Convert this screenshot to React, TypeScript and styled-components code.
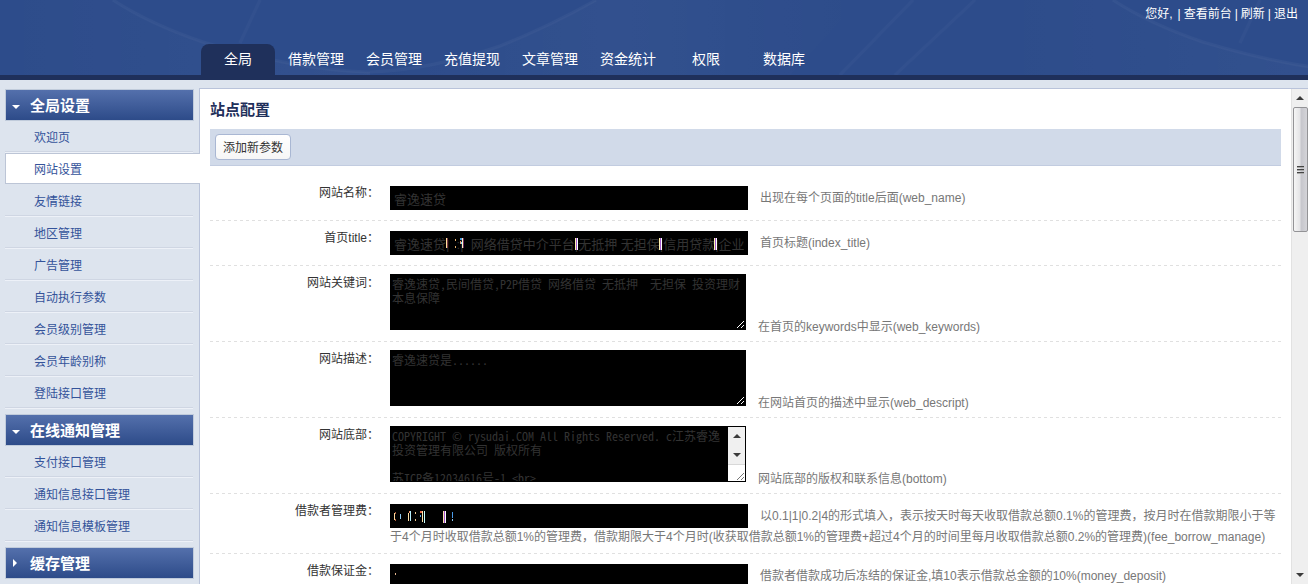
import React from "react";
import styled, { createGlobalStyle, css } from "styled-components";

const latin = `"Liberation Sans", "Noto Sans CJK SC", sans-serif`;
const cjk = `"Noto Sans CJK SC", sans-serif`;

const GlobalStyle = createGlobalStyle`
  *, *::before, *::after { box-sizing: border-box; }
  html, body { margin: 0; overflow: hidden; }
  body { font: 12px/15px ${latin}; color: #333; background: #dde4ee; }
  a { color: inherit; text-decoration: none; }
`;

const Page = styled.div`
  display: flex;
  flex-direction: column;
  height: 100vh;
`;

const Header = styled.header`
  position: relative;
  display: flex;
  flex-direction: column;
  justify-content: space-between;
  flex: none;
  height: 80px;
  background: #2d4c8b;
  border-bottom: 5px solid #1f305b;
`;

const Backdrop = styled.svg`
  position: absolute;
  inset: 0;
  width: 100%;
  height: 100%;
`;

const UserLinks = styled.div`
  position: relative;
  display: flex;
  justify-content: flex-end;
  gap: 3px;
  padding: 7px 10px 0 0;
  color: #fff;
`;

const Greeting = styled.span`
  margin-right: 2px;
`;

const Tabs = styled.nav`
  position: relative;
  display: flex;
  gap: 4px;
  padding-left: 201px;
`;

const Tab = styled.a<{ $active?: boolean }>`
  width: 74px;
  height: 31px;
  border-radius: 8px 8px 0 0;
  color: #fff;
  font-size: 14px;
  line-height: 30px;
  text-align: center;
  white-space: nowrap;
  background: ${(p) => (p.$active ? "#1f305b" : "transparent")};
`;

const Body = styled.div`
  display: flex;
  flex: 1;
  min-height: 0;
  padding-top: 8px;
`;

const Sidebar = styled.aside`
  flex: none;
  width: 199px;
  padding: 1px 0 0 5px;
`;

const Group = styled.section`
  margin-bottom: 5px;
`;

const GroupButton = styled.button`
  display: flex;
  align-items: center;
  gap: 9px;
  width: 189px;
  height: 32px;
  padding: 0 6px;
  border: 1px solid #c0cbdb;
  background: linear-gradient(#5470ac, #2d4b89);
  color: #fff;
  font: bold 15px/30px ${cjk};
`;

const MenuList = styled.ul`
  margin: 0;
  padding: 0;
  list-style: none;
`;

const MenuItem = styled.li<{ $active?: boolean }>`
  height: 32px;
  margin-right: 6px;
  padding-left: 29px;
  border-bottom: 1px solid #edf1f8;
  box-shadow: inset 0 -1px #cfd6e3;
  color: #34539a;
  line-height: 34px;
  ${(p) =>
    p.$active &&
    css`
      position: relative;
      height: 31px;
      margin: 0 -1px 1px 0;
      padding-left: 28px;
      border: solid #bcc5d6;
      border-width: 1px 0 1px 1px;
      box-shadow: none;
      background: #fff;
      line-height: 32px;
    `}
`;

const Main = styled.main`
  display: flex;
  flex: 1;
  min-width: 0;
  overflow: hidden;
  border: solid #b9c3da;
  border-width: 1px 0 0 1px;
  background: #fff;
`;

const Content = styled.div`
  flex: 1;
  min-width: 0;
  padding: 0 10px;
`;

const Title = styled.h1`
  margin: 0;
  color: #1f305b;
  font: bold 15px/40px ${cjk};
`;

const Toolbar = styled.div`
  height: 37px;
  margin-bottom: 10px;
  padding: 5px;
  border-bottom: 1px solid #c2cce0;
  background: #d1dae9;
`;

const AddButton = styled.button`
  height: 26px;
  padding: 0 7px;
  border: 1px solid #a9b7d3;
  border-radius: 4px;
  background: linear-gradient(#fff, #f6f6f6);
  color: #333;
  font: 12px/22px ${cjk};
`;

const Row = styled.div`
  display: flex;
  padding: 8px 0 9px;
  background: repeating-linear-gradient(90deg, #e0e0e0 0 3px, transparent 3px 6px) bottom / 100% 1px no-repeat;
`;

const RowLabel = styled.label`
  flex: none;
  width: 180px;
  padding: 2px 11px 0 0;
  text-align: right;
`;

const RowField = styled.div`
  flex: 1;
  min-width: 0;
`;

const Control = styled.span<{ $multiline?: boolean }>`
  position: relative;
  display: inline-block;
  vertical-align: ${(p) => (p.$multiline ? "bottom" : "middle")};
  margin: ${(p) => (p.$multiline ? "0 12px 3px 0" : "2px 12px 2px 0")};
`;

const TextInput = styled.input`
  display: block;
  width: 358px;
  height: 24px;
  padding: 0 3px;
  border: 1px solid #000;
  border-radius: 0;
  background: #000;
  color: #333;
  font: 13px/22px ${latin};
`;

const TextBox = styled.textarea`
  display: block;
  width: 356px;
  height: 56px;
  padding: 2px 1px;
  border: 1px solid #000;
  background: #000;
  color: #333;
  font: 12px/14px ${cjk};
  font-feature-settings: "hwid";
  overflow: hidden;
  resize: none;
`;

const Hint = styled.span<{ $multiline?: boolean }>`
  color: #777;
  line-height: ${(p) => (p.$multiline ? "12px" : "15px")};
  vertical-align: ${(p) => (p.$multiline ? "bottom" : "middle")};
`;

const Marks = styled.svg`
  position: absolute;
  left: 0;
  top: 0;
  pointer-events: none;
`;

const Grip = styled.svg`
  position: absolute;
  right: 1px;
  bottom: 1px;
  pointer-events: none;
`;

const BoxScroll = styled.div`
  position: absolute;
  top: 1px;
  right: 1px;
  bottom: 1px;
  display: flex;
  flex-direction: column;
  justify-content: space-around;
  align-items: center;
  width: 17px;
  padding-bottom: 17px;
  background: linear-gradient(#f0f0f0 0 37px, #d8d8d8 37px 38px, #fff 38px);
`;

const PageScroll = styled.div`
  display: flex;
  flex-direction: column;
  align-items: center;
  flex: none;
  width: 17px;
  border-left: 1px solid #e2e2e2;
  background: #efefef;
`;

const ScrollThumb = styled.div`
  display: flex;
  flex-direction: column;
  align-items: center;
  justify-content: center;
  gap: 1px;
  width: 15px;
  height: 125px;
  border: 1px solid #939396;
  border-radius: 2px;
  background: linear-gradient(90deg, #f5f5f5, #e4e4e6 45%, #c6c6cc 55%, #d4d4d8);
`;

const ThumbLine = styled.span`
  width: 7px;
  height: 2px;
  border-top: 1px solid #444;
  background: #aaa;
`;

const ScrollEnd = styled.div<{ $last?: boolean }>`
  display: flex;
  align-items: center;
  height: 18px;
  margin-top: ${(p) => (p.$last ? "auto" : "0")};
`;

const Arrow = ({ up }: { up?: boolean }) => (
  <svg width="8" height="4" viewBox="0 0 8 4" aria-hidden="true">
    <path d={up ? "M4 0 8 4H0Z" : "M0 0H8L4 4Z"} fill="#3a3a3a" />
  </svg>
);

type Mark = [x: number, y: number, w: number, h: number, color: string];

type Field = {
  id: string;
  label: string;
  hint: string;
  value: string;
  kind?: "area" | "scroll";
  marks?: Mark[];
};

const pipe = (x: number): Mark[] => [
  [x, 7, 1, 12, "#fff3b0"],
  [x + 1, 7, 1, 12, "#a45bd0"],
  [x + 2, 7, 1, 12, "#fff"],
];

const fields: Field[] = [
  { id: "web_name", label: "网站名称", value: "睿逸速贷", hint: "出现在每个页面的title后面(web_name)" },
  {
    id: "index_title",
    label: "首页title",
    value: "睿逸速贷|  :|  网络借贷中介平台|无抵押 无担保|信用贷款|企业",
    hint: "首页标题(index_title)",
    marks: [
      [56, 7, 1, 10, "#ffe29a"],
      [57, 7, 1, 10, "#7a3b4c"],
      [65, 8, 1, 2, "#e8b46c"],
      [65, 15, 1, 2, "#e8b46c"],
      [70, 7, 2, 2, "#4a9be0"],
      [70, 10, 1, 3, "#f0a070"],
      [71, 11, 1, 2, "#7ad0ff"],
      [72, 7, 1, 10, "#fff0c0"],
      [73, 7, 1, 10, "#6d2c5c"],
      ...pipe(185),
      ...pipe(269),
      ...pipe(324),
    ],
  },
  {
    id: "web_keywords",
    label: "网站关键词",
    kind: "area",
    value: "睿逸速贷,民间借贷,P2P借贷 网络借贷 无抵押  无担保 投资理财\n本息保障",
    hint: "在首页的keywords中显示(web_keywords)",
  },
  { id: "web_descript", label: "网站描述", kind: "area", value: "睿逸速贷是......", hint: "在网站首页的描述中显示(web_descript)" },
  {
    id: "bottom",
    label: "网站底部",
    kind: "scroll",
    value: "COPYRIGHT © rysudai.COM All Rights Reserved. c江苏睿逸\n投资管理有限公司 版权所有\n\n苏ICP备12034616号-1 <br>",
    hint: "网站底部的版权和联系信息(bottom)",
  },
  {
    id: "fee_borrow_manage",
    label: "借款者管理费",
    value: "",
    hint: "以0.1|1|0.2|4的形式填入，表示按天时每天收取借款总额0.1%的管理费，按月时在借款期限小于等于4个月时收取借款总额1%的管理费，借款期限大于4个月时(收获取借款总额1%的管理费+超过4个月的时间里每月收取借款总额0.2%的管理费)(fee_borrow_manage)",
    marks: [
      [5, 8, 1, 2, "#b0603c"],
      [4, 9, 1, 7, "#ffd79a"],
      [5, 15, 1, 2, "#b0603c"],
      [10, 10, 1, 5, "#8fc8f0"],
      [18, 9, 1, 8, "#ffe0a8"],
      [19, 7, 1, 2, "#e89068"],
      [20, 7, 1, 10, "#b8f0ff"],
      [25, 8, 1, 2, "#f0c890"],
      [25, 15, 1, 2, "#f0c890"],
      [30, 7, 2, 2, "#e86a4a"],
      [30, 11, 1, 2, "#5aa8f0"],
      [32, 7, 1, 11, "#ffe8b0"],
      [34, 7, 1, 12, "#c8ffff"],
      [53, 7, 1, 12, "#ffe8b0"],
      [54, 7, 1, 12, "#a050d0"],
      [55, 7, 1, 12, "#fff"],
      [62, 8, 1, 6, "#4a9be8"],
      [62, 15, 1, 2, "#8fc8f0"],
    ],
  },
  {
    id: "money_deposit",
    label: "借款保证金",
    value: "",
    hint: "借款者借款成功后冻结的保证金,填10表示借款总金额的10%(money_deposit)",
    marks: [[5, 9, 1, 2, "#e8b890"]],
  },
];

const tabs = ["全局", "借款管理", "会员管理", "充值提现", "文章管理", "资金统计", "权限", "数据库"];

const groups = [
  {
    name: "全局设置",
    open: true,
    items: ["欢迎页", "网站设置", "友情链接", "地区管理", "广告管理", "自动执行参数", "会员级别管理", "会员年龄别称", "登陆接口管理"],
  },
  { name: "在线通知管理", open: true, items: ["支付接口管理", "通知信息接口管理", "通知信息模板管理"] },
  { name: "缓存管理", open: false, items: [] },
];

const ResizeGrip = ({ color }: { color: string }) => (
  <Grip width="8" height="8" viewBox="0 0 8 8" aria-hidden="true" shapeRendering="crispEdges">
    <path d="M0 7 7 0M4 7 7 4" stroke={color} fill="none" />
  </Grip>
);

function FieldRow({ field }: { field: Field }) {
  const multiline = Boolean(field.kind);
  return (
    <Row>
      <RowLabel htmlFor={field.id}>{field.label}：</RowLabel>
      <RowField>
        <Control $multiline={multiline}>
          {multiline ? (
            <TextBox id={field.id} defaultValue={field.value} spellCheck={false} />
          ) : (
            <TextInput id={field.id} type="text" defaultValue={field.value} />
          )}
          {field.marks && (
            <Marks width="358" height="24" aria-hidden="true" shapeRendering="crispEdges">
              {field.marks.map(([x, y, w, h, color], i) => (
                <rect key={i} x={x} y={y} width={w} height={h} fill={color} />
              ))}
            </Marks>
          )}
          {field.kind === "scroll" && (
            <BoxScroll>
              <Arrow up />
              <Arrow />
            </BoxScroll>
          )}
          {multiline && <ResizeGrip color={field.kind === "scroll" ? "#777" : "#fff"} />}
        </Control>
        <Hint $multiline={multiline}>{field.hint}</Hint>
      </RowField>
    </Row>
  );
}

export default function App() {
  return (
    <Page>
      <GlobalStyle />
      <Header>
        <Backdrop aria-hidden="true">
          <defs>
            <linearGradient id="sweep" x1="0" x2="1" y1="0" y2="0">
              <stop offset="0" stopColor="#fff" stopOpacity="0" />
              <stop offset="0.5" stopColor="#fff" stopOpacity="0.025" />
              <stop offset="1" stopColor="#fff" stopOpacity="0" />
            </linearGradient>
            <linearGradient id="rise" x1="0" x2="1" y1="0" y2="0">
              <stop offset="0" stopColor="#fff" stopOpacity="0" />
              <stop offset="1" stopColor="#fff" stopOpacity="0.03" />
            </linearGradient>
            <pattern id="waves" width="1000" height="75" patternUnits="userSpaceOnUse">
              <path d="M0 0H113Q150 24 203 42 300 71 370 72V75H0Z" fill="url(#rise)" />
              <path d="M370 75V72Q430 70 500 46 550 26 596 0H860L790 75Z" fill="url(#sweep)" />
              <path d="M113 0Q150 24 203 42 300 71 370 72 430 70 500 46 550 26 596 0" fill="none" stroke="#fff" strokeOpacity="0.03" strokeWidth="3" />
              <path d="M240 43 260 0M840 75 913 0M895 75 975 0" fill="none" stroke="#fff" strokeOpacity="0.025" strokeWidth="3" />
            </pattern>
          </defs>
          <rect width="100%" height="100%" fill="url(#waves)" />
        </Backdrop>
        <UserLinks>
          <Greeting>您好,</Greeting>
          <span>|</span>
          <a href="#front">查看前台</a>
          <span>|</span>
          <a href="#refresh">刷新</a>
          <span>|</span>
          <a href="#logout">退出</a>
        </UserLinks>
        <Tabs>
          {tabs.map((tab, i) => (
            <Tab key={tab} href="#tab" $active={i === 0}>
              {tab}
            </Tab>
          ))}
        </Tabs>
      </Header>
      <Body>
        <Sidebar>
          {groups.map((group) => (
            <Group key={group.name}>
              <GroupButton type="button" aria-expanded={group.open}>
                <svg width="9" height="9" viewBox="0 0 9 9" aria-hidden="true">
                  <path d={group.open ? "M0 4H8L4 8Z" : "M1 0V8L5 4Z"} fill="#fff" />
                </svg>
                {group.name}
              </GroupButton>
              <MenuList>
                {group.items.map((item) => (
                  <MenuItem key={item} $active={item === "网站设置"}>
                    <a href="#item">{item}</a>
                  </MenuItem>
                ))}
              </MenuList>
            </Group>
          ))}
        </Sidebar>
        <Main>
          <Content>
            <Title>站点配置</Title>
            <Toolbar>
              <AddButton type="button">添加新参数</AddButton>
            </Toolbar>
            <form>
              {fields.map((field) => (
                <FieldRow key={field.id} field={field} />
              ))}
            </form>
          </Content>
          <PageScroll aria-hidden="true">
            <ScrollEnd>
              <Arrow up />
            </ScrollEnd>
            <ScrollThumb>
              <ThumbLine />
              <ThumbLine />
              <ThumbLine />
            </ScrollThumb>
            <ScrollEnd $last>
              <Arrow />
            </ScrollEnd>
          </PageScroll>
        </Main>
      </Body>
    </Page>
  );
}
